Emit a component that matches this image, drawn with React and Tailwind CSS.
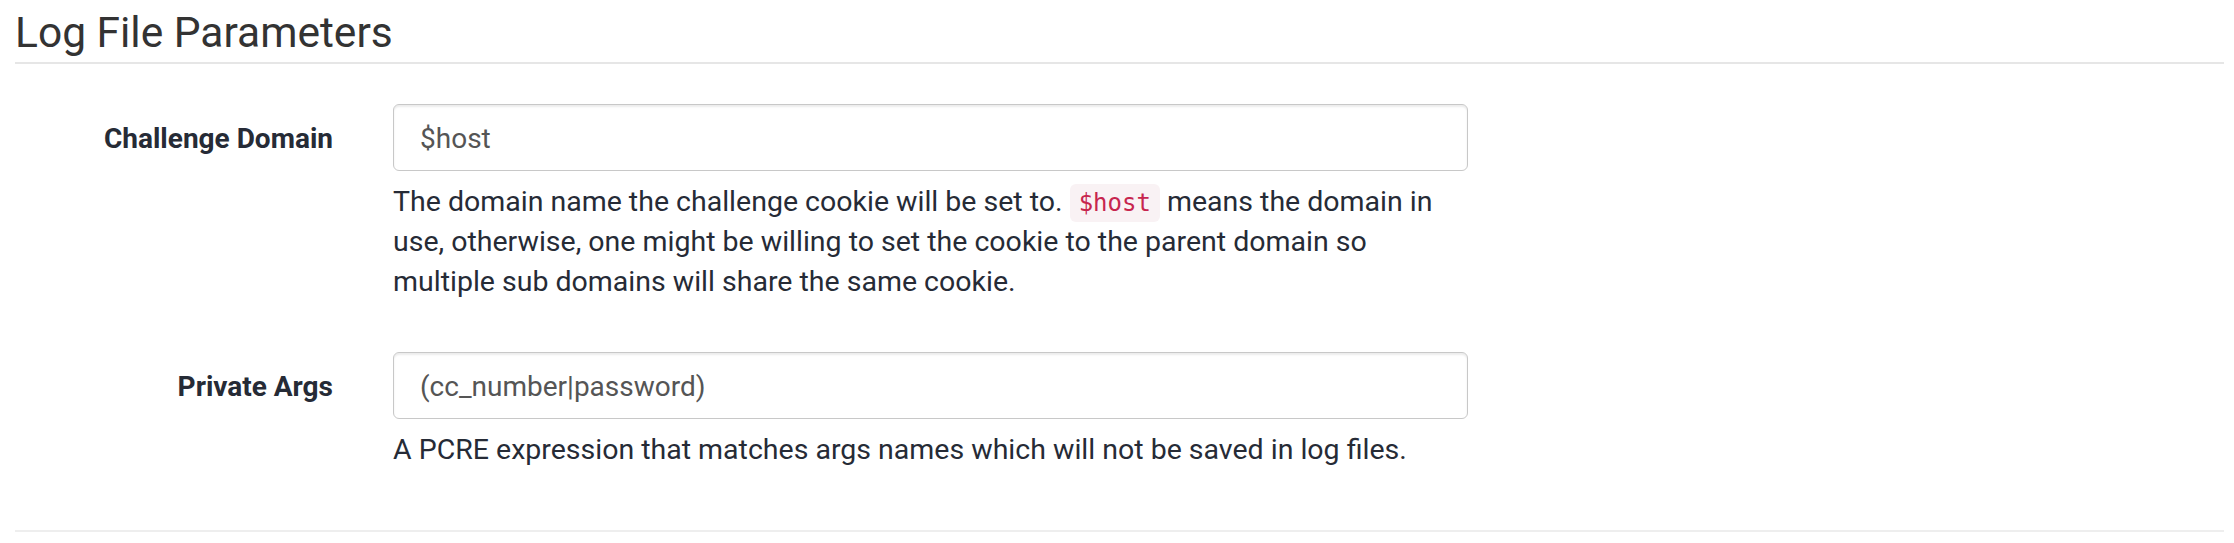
import React from "react";

const font = { fontFamily: "Roboto, 'Liberation Sans', sans-serif" };

function Field({ label, value, children }) {
  return (
    <div className="flex">
      <div className="w-[318px] shrink-0 text-right">
        <div className="pt-[1px] text-[28px] leading-[67px] font-bold text-[#262b36]">{label}</div>
      </div>
      <div className="ml-[60px] w-[1075px] shrink-0">
        <div className="h-[67px] rounded-[6px] border border-[#c8c8c8] shadow-[inset_0_2px_2px_rgba(0,0,0,0.08)] bg-white flex items-center pl-[26px] pt-[3px] text-[28px] text-[#555555]">
          {value}
        </div>
        <div className="mt-[11px] text-[28.5px] leading-[40px] text-[#262b36]">{children}</div>
      </div>
    </div>
  );
}

export default function App() {
  return (
    <div className="bg-white w-[2234px] h-[543px] pl-[15px] pr-[10px] overflow-hidden" style={font}>
      <div className="pt-[11px] pb-[7px] border-b-2 border-[#e6e6e6] text-[42.5px] leading-[44px] text-[#333333]">
        Log File Parameters
      </div>
      <div className="pt-[40px] pb-[60px] border-b-2 border-[#eeeeee] flex flex-col gap-[50px]">
        <Field label="Challenge Domain" value="$host">
          The domain name the challenge cookie will be set to.{" "}
          <code
            className="px-[9px] py-[5px] rounded-[6px] bg-[#f9f2f4] text-[#c7254e] text-[24px] leading-none"
            style={{ fontFamily: "'DejaVu Sans Mono', 'Liberation Mono', monospace" }}
          >
            $host
          </code>{" "}
          means the domain in use, otherwise, one might be willing to set the cookie to the parent domain so
          multiple sub domains will share the same cookie.
        </Field>
        <Field label="Private Args" value="(cc_number|password)">
          A PCRE expression that matches args names which will not be saved in log files.
        </Field>
      </div>
    </div>
  );
}
